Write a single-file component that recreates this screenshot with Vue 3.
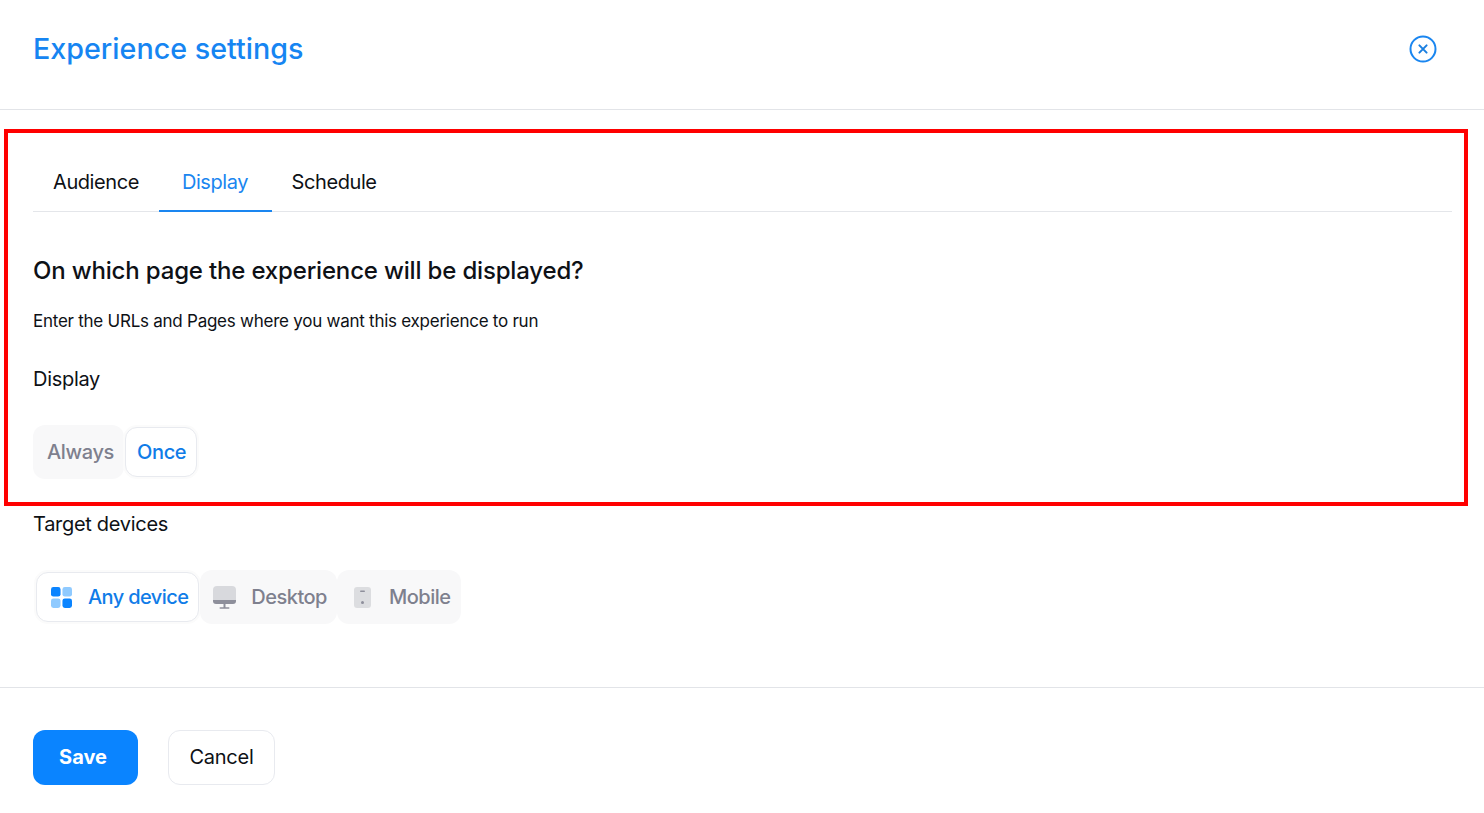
<script setup>
const tabs = [
  { label: 'Audience', active: false },
  { label: 'Display', active: true },
  { label: 'Schedule', active: false }
]
</script>

<template>
  <div class="page">
    <header class="header">
      <h1 class="title">Experience settings</h1>
      <button class="close" aria-label="Close">
        <svg width="28" height="28" viewBox="0 0 28 28" fill="none">
          <circle cx="14" cy="14" r="12.5" stroke="#1a86f0" stroke-width="2" />
          <path d="M10.4 10.4l7.2 7.2M17.6 10.4l-7.2 7.2" stroke="#1a7fe0" stroke-width="2" stroke-linecap="round" />
        </svg>
      </button>
    </header>

    <main class="body">
      <nav class="tabs">
        <span v-for="t in tabs" :key="t.label" class="tab" :class="{ active: t.active }">{{ t.label }}</span>
      </nav>

      <h2 class="question">On which page the experience will be displayed?</h2>
      <p class="hint">Enter the URLs and Pages where you want this experience to run</p>

      <div class="label display-label">Display</div>
      <div class="segment once-seg">
        <span class="seg-item always">Always</span>
        <span class="seg-item selected once">Once</span>
      </div>

      <div class="label target-label">Target devices</div>
      <div class="segment devices">
        <span class="seg-item selected device any">
          <svg width="21" height="21" viewBox="0 0 22 22">
            <rect x="0" y="0" width="10" height="10" rx="2.5" fill="#0a84ff" />
            <rect x="12" y="0" width="10" height="10" rx="2.5" fill="#8fcaff" />
            <rect x="0" y="12" width="10" height="10" rx="2.5" fill="#8fcaff" />
            <rect x="12" y="12" width="10" height="10" rx="2.5" fill="#0a84ff" />
          </svg>
          Any device
        </span>
        <span class="seg-item device desktop">
          <svg width="23" height="23" viewBox="0 0 23 23">
            <path d="M4 0h15a4 4 0 0 1 4 4v10H0V4a4 4 0 0 1 4-4z" fill="#d8d9dd" />
            <path d="M0 14h23v1a3 3 0 0 1-3 3H3a3 3 0 0 1-3-3z" fill="#8e8f9b" />
            <rect x="10.5" y="18" width="2" height="4" fill="#8e8f9b" />
            <rect x="6.5" y="21.2" width="10" height="1.6" rx="0.8" fill="#8e8f9b" />
          </svg>
          Desktop
        </span>
        <span class="seg-item device mobile">
          <svg width="17" height="21" viewBox="0 0 17 21">
            <rect x="0" y="0" width="17" height="21" rx="3" fill="#dcdde0" />
            <rect x="6" y="3.4" width="5" height="1.6" rx="0.8" fill="#8e8f9b" />
            <circle cx="8.5" cy="15.5" r="1.5" fill="#8e8f9b" />
          </svg>
          Mobile
        </span>
      </div>
    </main>

    <footer class="footer">
      <button class="btn primary">Save</button>
      <button class="btn secondary">Cancel</button>
    </footer>

    <div class="annotation"></div>
  </div>
</template>

<style>
html, body { margin: 0; background: #fff; }
</style>

<style scoped>
.page {
  position: relative;
  width: 1484px;
  height: 813px;
  overflow: hidden;
  background: #fff;
  font-family: Inter, "Liberation Sans", sans-serif;
  color: #0e1116;
}
.header {
  box-sizing: border-box;
  height: 110px;
  padding: 0 47px 12px 33px;
  display: flex;
  align-items: center;
  justify-content: space-between;
  border-bottom: 1px solid #e2e4e8;
}
.title {
  margin: 0;
  font-size: 28.7px;
  font-weight: 500;
  color: #1685f2;
}
.close {
  padding: 0;
  border: 0;
  background: none;
  width: 28px;
  height: 28px;
  display: block;
}
.body {
  box-sizing: border-box;
  height: 578px;
  padding: 44px 32px 0 33px;
  border-bottom: 1px solid #e2e4e8;
}
.tabs {
  display: flex;
  height: 58px;
  box-sizing: border-box;
  border-bottom: 1px solid #e4e6ea;
}
.tab {
  box-sizing: border-box;
  height: 58px;
  padding: 0 20px;
  line-height: 57px;
  font-size: 20px;
  letter-spacing: -0.42px;
  color: #0e1116;
}
.tab.active {
  color: #1a86f0;
  border-bottom: 2px solid #1a86f0;
  padding: 0 23.5px 0 23px;
}
.question {
  margin: 44px 0 0;
  font-size: 24px;
  line-height: 30px;
  font-weight: 500;
  letter-spacing: -0.17px;
}
.hint {
  margin: 23px 0 0;
  font-size: 17px;
  line-height: 24px;
  letter-spacing: -0.25px;
}
.label {
  font-size: 20px;
  line-height: 26px;
  letter-spacing: -0.3px;
}
.display-label { margin-top: 33px; }
.target-label { margin-top: 32px; }
.segment {
  display: flex;
  align-items: center;
  width: fit-content;
  height: 54px;
}
.once-seg { margin-top: 33px; }
.devices { margin-top: 33px; }
.seg-item {
  box-sizing: border-box;
  height: 54px;
  display: flex;
  align-items: center;
  font-size: 20px;
  letter-spacing: -0.35px;
  color: #7e808e;
  background: #f8f8f9;
  border-radius: 12px;
  font-weight: 500;
}
.selected {
  height: 50px;
  background: #fff;
  border: 1px solid #e8eaef;
  box-shadow: 0 0 0 2px #fbfbfb;
  color: #107ce8;
}
.always { padding: 0 10px 0 14px; width: 91px; }
.once { padding: 0 10px 0 11px; margin-left: 1px; }
.device { gap: 15px; letter-spacing: -0.5px; }
.any { padding: 0 10px 0 14px; gap: 16px; letter-spacing: -0.6px; margin-left: 3px; margin-right: 1px; }
.desktop { padding: 0 10px 0 13px; }
.mobile { padding: 0 10px 0 17px; gap: 18px; }
.footer {
  padding: 42px 0 0 33px;
  display: flex;
  gap: 30px;
}
.btn {
  font-family: inherit;
  font-size: 20px;
  height: 55px;
  border-radius: 12px;
  padding: 0 0 2px;
}
.primary {
  width: 105px;
  padding-right: 5px;
  background: #0a84ff;
  border: 0;
  color: #fff;
  font-weight: 700;
}
.secondary {
  width: 107px;
  background: #fff;
  border: 1px solid #e8eaef;
  color: #0e1116;
  letter-spacing: -0.25px;
}
.annotation {
  position: absolute;
  left: 4px;
  top: 129px;
  width: 1456px;
  height: 369px;
  border: 4px solid #ff0000;
}
</style>
